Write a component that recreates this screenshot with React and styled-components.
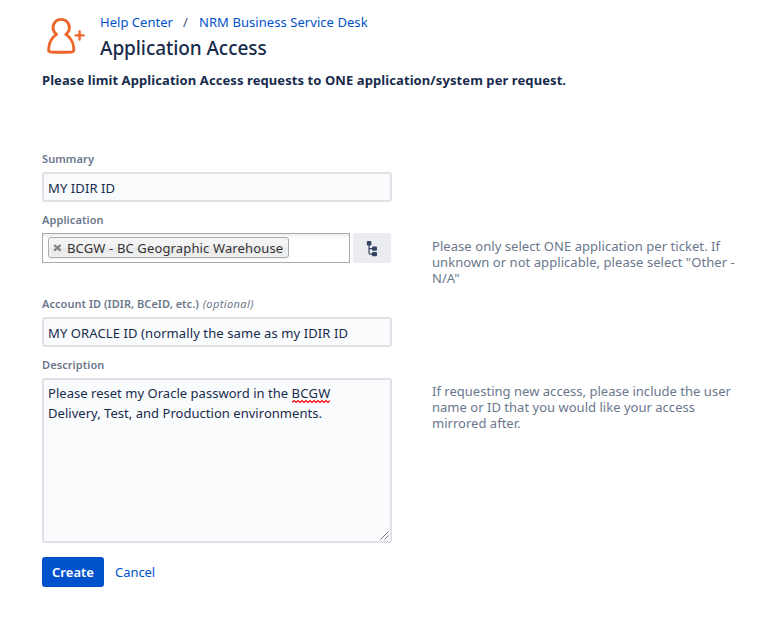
import React from 'react';
import styled, { createGlobalStyle } from 'styled-components';

const Global = createGlobalStyle`
  * { box-sizing: border-box; }
  body {
    margin: 0;
    background: #fff;
    color: #172b4d;
    font: 400 13px/20px "Noto Sans", "Open Sans", sans-serif;
  }
`;

const Page = styled.main`
  width: 772px;
  height: 626px;
  padding: 12px 0 0 42px;
  overflow: hidden;
`;

const Header = styled.header`
  display: flex;
  height: 58px;
`;

const IconBox = styled.div`
  width: 58px;
  height: 48px;
  padding-top: 6px;
  flex: none;
`;

const Crumbs = styled.nav`
  display: flex;
  height: 20px;
  gap: 10px;
`;

const Link = styled.a`
  color: #0052cc;
  text-decoration: none;
  white-space: nowrap;
  letter-spacing: ${(p) => p.$track || 0.03}px;
`;

const Slash = styled.span`
  width: 6px;
  color: #42526e;
`;

const Title = styled.h1`
  margin: 2px 0 0;
  font-size: 19px;
  font-weight: 500;
  line-height: 28px;
  letter-spacing: -0.07px;
`;

const Notice = styled.p`
  margin: 0 0 61px;
  font-weight: 700;
  letter-spacing: 0.085px;
`;

const Field = styled.section`
  display: grid;
  grid-template-columns: 350px 320px;
  grid-template-rows: 21px auto;
  column-gap: 40px;
  margin-bottom: ${(p) => p.$after || 10}px;
`;

const Label = styled.label`
  grid-column: 1;
  color: #6b778c;
  font-size: 11px;
  font-weight: 600;
  line-height: 16px;
  letter-spacing: ${(p) => p.$track || 0.08}px;
  white-space: pre;
`;

const Optional = styled.em`
  margin-left: 1px;
  font-weight: 400;
  letter-spacing: 0.4px;
`;

const Input = styled.input`
  grid-area: 2 / 1;
  width: 350px;
  height: 30px;
  padding: 2px 4px 0;
  border: 2px solid #dfe1e6;
  border-radius: 3px;
  background: #fafbfc;
  color: #172b4d;
  font: inherit;
  letter-spacing: 0.1px;
  outline: none;
`;

const PickerRow = styled.div`
  grid-area: 2 / 1;
  display: flex;
  gap: 3px;
`;

const Picker = styled.div`
  width: 308px;
  height: 30px;
  padding: 3px 5px;
  border: 1px solid #aaa;
  background: linear-gradient(#eee 0, #fff 5px);
`;

const Chip = styled.span`
  display: flex;
  align-items: center;
  width: 241px;
  height: 21px;
  padding-left: 4px;
  gap: 5px;
  border: 1px solid #aaa;
  border-radius: 3px;
  background: linear-gradient(#f4f4f4 20%, #f0f0f0 50%, #e8e8e8 52%, #eee);
  box-shadow: 0 0 2px #fff inset, 0 1px 0 rgba(0, 0, 0, 0.05);
  color: #333;
  line-height: 20px;
  letter-spacing: 0.14px;
  white-space: nowrap;
`;

const TreeButton = styled.button`
  display: flex;
  align-items: center;
  justify-content: center;
  width: 38px;
  height: 30px;
  padding: 1px 0 0;
  border: 0;
  border-radius: 3px;
  background: #ebecf0;
`;

const Help = styled.p`
  grid-area: 2 / 2;
  align-self: start;
  margin: 5px 0 0;
  height: ${(p) => p.$h || 25}px;
  color: #6b778c;
  line-height: 16px;
  letter-spacing: ${(p) => p.$track || 0.06}px;
  white-space: nowrap;
`;

const TextArea = styled.div`
  grid-area: 2 / 1;
  position: relative;
  width: 350px;
  height: 165px;
  padding: 3px 4px;
  border: 2px solid #dfe1e6;
  border-radius: 3px;
  background: #fafbfc;
  letter-spacing: 0.03px;
  white-space: nowrap;
`;

const Misspelled = styled.span`
  position: relative;
  letter-spacing: 0.26px;
`;

const Squiggle = styled.svg`
  position: absolute;
  left: 0;
  bottom: -1px;
`;

const Grip = styled.svg`
  position: absolute;
  right: 0;
  bottom: 0;
`;

const Actions = styled.footer`
  display: flex;
  gap: 11px;
  line-height: 31px;
`;

const Create = styled.button`
  width: 62px;
  height: 30px;
  padding: 0 0 1px;
  border: 0;
  border-radius: 3px;
  background: #0052cc;
  color: #fff;
  font: inherit;
  font-weight: 600;
  letter-spacing: 0.04px;
`;

const PersonAdd = () => (
  <svg width="46" height="40" viewBox="0 0 46 40" fill="none" stroke="#ec652b" strokeLinejoin="round" strokeLinecap="round">
    <path
      strokeWidth="2.8"
      d="M14.6 16.4 A8.2 8.2 0 1 1 23.8 16.4 C28.4 19.4 31.1 24 31.7 29.6 L31.8 31.8 Q31.8 33.8 29.5 34 Q19 34.5 8.8 34 Q6.5 33.8 6.6 31.8 L6.8 29.6 C7.4 24 10.1 19.4 14.6 16.4 Z"
    />
    <path strokeWidth="2.4" d="M33.7 17.4 H41.6 M37.6 13.4 V21.5" />
  </svg>
);

const Remove = () => (
  <svg width="9" height="9" viewBox="0 0 9 9" stroke="#808080" strokeWidth="2.2">
    <path d="M1.2 2 L7.6 7.6 M7.6 2 L1.2 7.6" />
  </svg>
);

const Tree = () => (
  <svg width="12" height="16" viewBox="0 0 12 16" fill="#344563">
    <rect x="0.8" y="0" width="4.6" height="4.5" rx="1" />
    <rect x="6" y="5.6" width="5" height="4.2" rx="1" />
    <rect x="6" y="11" width="5" height="4.2" rx="1" />
    <path d="M3 4 V7.7 H6 M3 7.7 V12 Q3 13.1 4.2 13.1 H6" fill="none" stroke="#344563" strokeWidth="1.2" />
  </svg>
);

export default function App() {
  return (
    <Page>
      <Global />
      <Header>
        <IconBox><PersonAdd /></IconBox>
        <div>
          <Crumbs>
            <Link href="#">Help Center</Link>
            <Slash>/</Slash>
            <Link href="#" $track={0.06}>NRM Business Service Desk</Link>
          </Crumbs>
          <Title>Application Access</Title>
        </div>
      </Header>
      <Notice>Please limit Application Access requests to ONE application/system per request.</Notice>

      <Field>
        <Label>Summary</Label>
        <Input defaultValue="MY IDIR ID" />
      </Field>

      <Field $after={33}>
        <Label>Application</Label>
        <PickerRow>
          <Picker>
            <Chip><Remove />BCGW - BC Geographic Warehouse</Chip>
          </Picker>
          <TreeButton aria-label="Browse"><Tree /></TreeButton>
        </PickerRow>
        <Help>
          Please only select ONE application per ticket. If<br />
          unknown or not applicable, please select "Other -<br />
          N/A"
        </Help>
      </Field>

      <Field>
        <Label $track={0.04}>Account ID (IDIR, BCeID, etc.) <Optional>(optional)</Optional></Label>
        <Input defaultValue="MY ORACLE ID (normally the same as my IDIR ID" />
      </Field>

      <Field $after={14}>
        <Label>Description</Label>
        <TextArea>
          Please reset my Oracle password in the{' '}
          <Misspelled>
            BCGW
            <Squiggle width="39" height="3" viewBox="0 0 39 3" fill="none" stroke="#f00000" strokeWidth="1.2">
              <path d="M0 2.4 l2 -1.8 l2 1.8 l2 -1.8 l2 1.8 l2 -1.8 l2 1.8 l2 -1.8 l2 1.8 l2 -1.8 l2 1.8 l2 -1.8 l2 1.8 l2 -1.8 l2 1.8 l2 -1.8 l2 1.8 l2 -1.8 l2 1.8 l2 -1.8" />
            </Squiggle>
          </Misspelled>
          <br />
          Delivery, Test, and Production environments.
          <Grip width="11" height="11" viewBox="0 0 11 11" stroke="#777" strokeWidth="1">
            <path d="M1.5 9.5 L9.5 1.5 M5.5 9.5 L9.5 5.5" />
          </Grip>
        </TextArea>
        <Help $h={48} $track={0.02}>
          If requesting new access, please include the user<br />
          name or ID that you would like your access<br />
          mirrored after.
        </Help>
      </Field>

      <Actions>
        <Create>Create</Create>
        <Link href="#" $track={-0.05}>Cancel</Link>
      </Actions>
    </Page>
  );
}
